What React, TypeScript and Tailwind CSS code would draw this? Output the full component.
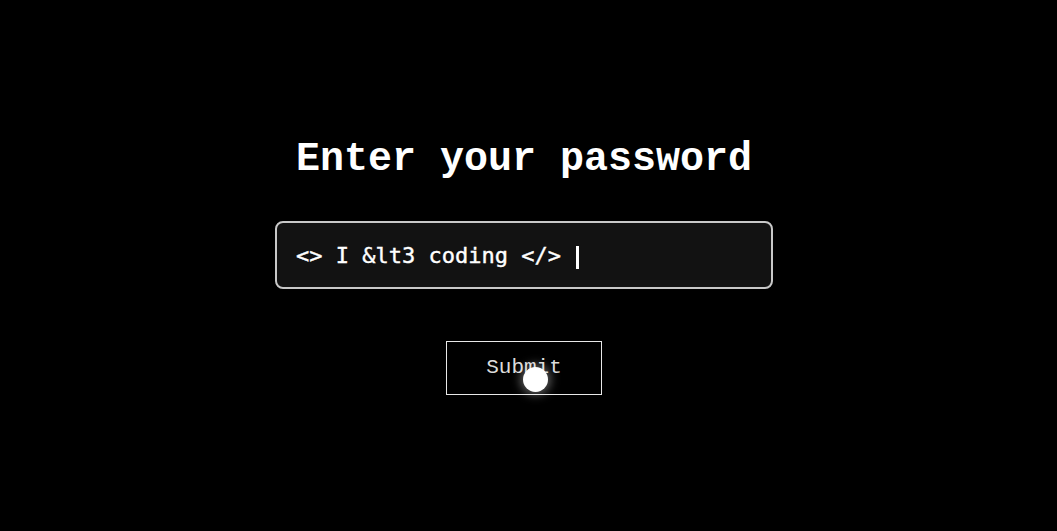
export default function App() {
  return (
    <div className="relative flex h-screen w-full flex-col items-center justify-center bg-black pr-[9px]">
      <h1 className="h-[48px] text-[40px] font-bold leading-[48px] text-white [font-family:'Courier_New','Nimbus_Mono_PS','Liberation_Mono',monospace]">
        Enter your password
      </h1>

      <div className="mt-[37px] flex h-[68px] w-[498px] items-center rounded-lg border-2 border-[#c8c8c8] bg-[#121212] pl-[19px]">
        <span className="whitespace-pre text-[22px] text-white [font-family:'DejaVu_Sans_Mono',monospace] [-webkit-text-stroke:0.4px_white]">
          {"<> I &lt3 coding </> "}
        </span>
        <span className="ml-[2px] mt-[4px] h-[23px] w-[3px] bg-white" />
      </div>

      <button className="mt-[52px] flex h-[54px] w-[156px] items-center justify-center border border-[#e8e8e8] bg-black text-[21px] text-[#dcdcdc] [font-family:'Courier_New','Nimbus_Mono_PS','Liberation_Mono',monospace]">
        Submit
      </button>

      {/* mouse cursor highlight */}
      <div className="pointer-events-none absolute left-[523px] top-[367px] h-[25px] w-[25px] rounded-full bg-white shadow-[0_0_10px_3px_rgba(255,255,255,0.35)]" />
    </div>
  );
}
